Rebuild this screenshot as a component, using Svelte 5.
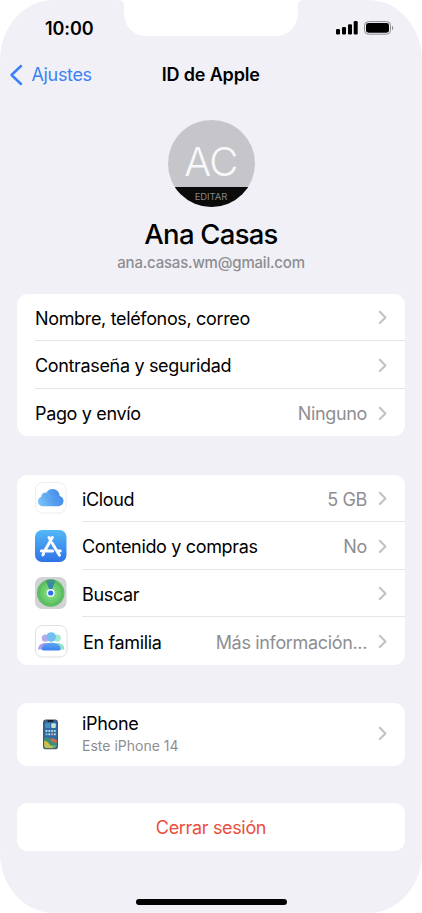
<script>
  const account = [
    { label: 'Nombre, teléfonos, correo', value: '' },
    { label: 'Contraseña y seguridad', value: '' },
    { label: 'Pago y envío', value: 'Ninguno' },
  ];
  const services = [
    { icon: 'cloud', label: 'iCloud', value: '5 GB' },
    { icon: 'store', label: 'Contenido y compras', value: 'No' },
    { icon: 'find', label: 'Buscar', value: '' },
    { icon: 'family', label: 'En familia', value: 'Más información...' },
  ];
</script>

{#snippet chevron()}
  <svg class="chevron" width="10" height="15" viewBox="0 0 10 15">
    <path d="M1.8 1.8 7.5 7.4 1.8 13" fill="none" stroke="#c3c3c6" stroke-width="2.1" stroke-linecap="round" stroke-linejoin="round" />
  </svg>
{/snippet}

{#snippet appIcon(name)}
  <svg class="icon" width="34" height="34" viewBox="0 0 34 34">
    {#if name === 'cloud'}
      <defs>
        <linearGradient id="cloud" x1="0" y1="0.7" x2="1" y2="0.4">
          <stop offset="0" stop-color="#78c4f8" /><stop offset="0.5" stop-color="#5aa0ee" /><stop offset="1" stop-color="#3f8bed" />
        </linearGradient>
      </defs>
      <rect x="1.5" y="1.5" width="30.5" height="30.5" rx="7" fill="#fff" stroke="#ededef" />
      <path d="M9.3 25.2C6.2 25.2 4 23.1 4 20.4c0-2.3 1.4-4 3.3-4.6-.1-2.8 2.5-4.8 5-3.9C13.5 9.6 15.8 8 18.5 8c4.1 0 7.1 3.1 7.2 7.1 2.3.6 3.8 2.5 3.8 4.9 0 3-2.3 5.2-5.2 5.2z" fill="url(#cloud)" />
      <path d="M7.3 15.8c-.1-2.8 2.5-4.8 5-3.9 2.4.8 3.8 2.8 4 5.2" fill="none" stroke="#91caf7" stroke-width=".6" opacity=".65" />
    {:else if name === 'store'}
      <defs>
        <linearGradient id="store" x1="0" y1="0" x2="0" y2="1">
          <stop offset="0" stop-color="#53b9f6" /><stop offset="1" stop-color="#2e72e8" />
        </linearGradient>
      </defs>
      <rect x="1" y="1" width="31.5" height="32" rx="7" fill="url(#store)" />
      <g stroke="#fff" stroke-width="2.9" stroke-linecap="round" fill="none">
        <path d="M18.4 8.4 10.9 21.5M15 8.4l1.7 2.9M18.1 14l7.4 12.3M7.4 22h11.2M24 22h2.3M9.6 24.8l-.8 1.3" />
      </g>
    {:else if name === 'find'}
      <defs>
        <linearGradient id="beam" x1="0" y1="0" x2="0" y2="1">
          <stop offset="0" stop-color="#3e987e" /><stop offset="1" stop-color="#3477d7" />
        </linearGradient>
      </defs>
      <rect x="1" y="1" width="31.5" height="32" rx="7" fill="#d2d3d4" />
      <circle cx="16.7" cy="17" r="13.8" fill="#5dbd62" />
      <circle cx="16.7" cy="17" r="10.3" fill="#6bcb6c" />
      <circle cx="16.7" cy="17" r="7" fill="#79d57a" />
      <path d="M16.7 17 11.9 4.6Q16.7 2.6 21.5 4.6z" fill="url(#beam)" />
      <circle cx="16.7" cy="17" r="4" fill="#fff" />
      <circle cx="16.7" cy="17" r="2.6" fill="#286fea" />
    {:else}
      <defs>
        <linearGradient id="body" x1="0" y1="0" x2="0" y2="1">
          <stop offset="0" stop-color="#5ea6f2" /><stop offset="1" stop-color="#3c83ed" />
        </linearGradient>
      </defs>
      <rect x="1.5" y="1.5" width="31.5" height="31.5" rx="7" fill="#fff" stroke="#dedfe2" />
      <circle cx="11.3" cy="14.1" r="3.6" fill="#b8a8ee" />
      <path d="M4.1 25.4c0-4 3-6.4 7.2-6.4 3 0 5 1.3 6 3.3l-4 3.1z" fill="#b29cec" />
      <circle cx="23.2" cy="14.1" r="3.6" fill="#9ee9d2" />
      <path d="M30.4 25.4c0-4-3-6.4-7.2-6.4-3 0-5 1.3-6 3.3l4 3.1z" fill="#8be2cf" />
      <circle cx="17.2" cy="13" r="4.8" fill="#74bff0" />
      <path d="M7.9 25c0-4.1 4-6.3 9.3-6.3s9.3 2.2 9.3 6.3c0 1-.5 1.4-1.5 1.4H9.4c-1 0-1.5-.4-1.5-1.4z" fill="url(#body)" />
    {/if}
  </svg>
{/snippet}

<main class="screen">
  <svg class="notch" width="186" height="38" viewBox="0 0 186 38" aria-hidden="true">
    <path d="M1 0Q6 .2 6 5v7C6 26 15 36 29 36h128c14 0 23-10 23-24V5q0-4.8 5-5z" fill="#fff" />
  </svg>

  <header class="status">
    <span class="time">10:00</span>
    <svg width="58" height="16" viewBox="0 0 58 16">
      <rect x="0" y="9" width="4" height="5.5" rx="1.2" />
      <rect x="6" y="7" width="4" height="7.5" rx="1.2" />
      <rect x="12" y="4.3" width="4" height="10.2" rx="1.2" />
      <rect x="17.7" y="1" width="4" height="13.5" rx="1.2" />
      <rect x="28.5" y="1.6" width="26" height="12.6" rx="3.8" fill="none" stroke="#8e8e91" />
      <rect x="30" y="3.1" width="23" height="9.6" rx="2.4" />
      <path d="M56 5.8c1.7.7 1.7 3.7 0 4.4z" fill="#8e8e91" />
    </svg>
  </header>

  <nav>
    <button class="back">
      <svg width="14" height="22" viewBox="0 0 14 22">
        <path d="M12 2 2.5 11 12 20" fill="none" stroke="#3b82f6" stroke-width="2.5" stroke-linecap="round" stroke-linejoin="round" />
      </svg>
      <span>Ajustes</span>
    </button>
    <h1>ID de Apple</h1>
    <span></span>
  </nav>

  <section class="profile">
    <div class="avatar">
      <span class="initials">AC</span>
      <span class="edit">EDITAR</span>
    </div>
    <h2>Ana Casas</h2>
    <p>ana.casas.wm@gmail.com</p>
  </section>

  <section class="card account">
    {#each account as item}
      <div class="row">
        <span class="label">{item.label}</span>
        <span class="value">{item.value}</span>
        {@render chevron()}
      </div>
    {/each}
  </section>

  <section class="card services">
    {#each services as item}
      <div class="service">
        {@render appIcon(item.icon)}
        <div class="row {item.icon}">
          <span class="label">{item.label}</span>
          <span class="value">{item.value}</span>
          {@render chevron()}
        </div>
      </div>
    {/each}
  </section>

  <section class="card device">
    <svg class="phone" width="16" height="31" viewBox="0 0 16 31">
      <rect x=".6" y="1" width="13.8" height="28.8" rx="2.4" fill="#2f6aa5" stroke="#4b4f54" stroke-width="1.1" />
      <path d="M1.2 19c4-2 6 1 12.6 5v3.3q0 1.9-2 1.9H3.2q-2 0-2-1.9z" fill="#3f8f78" />
      <path d="M1.2 22c4-1 5 5 10 7H3.2q-2 0-2-1.9z" fill="#dfbd3a" />
      <path d="M7 20c3-1 5 0 6.8 1v3c-3-1-5-1-6.8-4z" fill="#d86a4f" />
      <rect x="4.5" y="1.2" width="6" height="1.5" rx=".7" fill="#111" />
      <rect x="2.3" y="4.2" width="4.8" height="4.8" rx="1" fill="#4a91b8" />
      <rect x="8.2" y="4.2" width="4.6" height="4.8" rx="1" fill="#c6e2d6" />
      <g fill="#b9d3df">
        <rect x="2.5" y="11" width="2" height="2" rx=".4" />
        <rect x="5.3" y="11" width="2" height="2" rx=".4" />
        <rect x="8.1" y="11" width="2" height="2" rx=".4" />
        <rect x="10.8" y="11" width="2" height="2" rx=".4" />
        <rect x="2.5" y="14.3" width="2" height="2" rx=".4" fill="#87bdd6" />
        <rect x="5.3" y="14.3" width="2" height="2" rx=".4" />
        <rect x="8.1" y="14.3" width="2" height="2" rx=".4" fill="#e7a18b" />
        <rect x="10.8" y="14.3" width="2" height="2" rx=".4" />
      </g>
      <path d="M3 27.4h9.4" stroke="#8ccc9a" stroke-width="1.7" stroke-dasharray="1.7 .8" />
    </svg>
    <div class="device-text">
      <strong>iPhone</strong>
      <small>Este iPhone 14</small>
    </div>
    {@render chevron()}
  </section>

  <button class="card signout"><span>Cerrar sesión</span></button>
  <div class="home"></div>
</main>

<style>
  :global(body) { background: #fff; }
  * { box-sizing: border-box; }
  .screen {
    position: relative;
    width: 422px;
    height: 913px;
    display: flex;
    flex-direction: column;
    overflow: hidden;
    padding: 0 17px;
    background: #f1f0f6;
    border-radius: 54px / 60px;
    color: #000;
    font-family: Inter, 'Liberation Sans', sans-serif;
    font-size: 18px;
    letter-spacing: -0.34px;
  }
  .notch { position: absolute; left: 118px; top: 0; }
  svg { display: block; flex: none; }
  button { border: 0; padding: 0; background: none; font: inherit; letter-spacing: inherit; }
  h1, h2, p { margin: 0; }
  .status {
    display: flex;
    justify-content: space-between;
    align-items: center;
    height: 56px;
    padding: 0 11px 0 28px;
  }
  .time { font-size: 18px; font-weight: 600; letter-spacing: -0.1px; }
  nav {
    display: grid;
    grid-template-columns: 1fr auto 1fr;
    align-items: center;
    height: 37px;
    margin: 0 -8px 0 -8.5px;
  }
  .back { display: flex; align-items: center; gap: 9px; color: #3b82f6; }
  h1 { font-size: 18px; font-weight: 600; letter-spacing: -0.15px; }
  .profile { display: flex; flex-direction: column; align-items: center; height: 200.5px; padding-top: 27px; }
  .avatar {
    width: 87px;
    height: 87px;
    display: flex;
    flex: none;
    flex-direction: column;
    border-radius: 50%;
    overflow: hidden;
    background: #c6c5ca;
    text-align: center;
  }
  .initials { height: 67px; padding-top: 16px; line-height: 52px; font-size: 40px; font-weight: 300; letter-spacing: -0.6px; color: #f8f8fb; }
  .edit { height: 20px; background: #0b0b0b; color: #858585; font-size: 9.5px; line-height: 19px; letter-spacing: -0.1px; }
  h2 { margin-top: 10px; font-size: 27.5px; line-height: 34px; font-weight: 500; letter-spacing: -0.75px; }
  p { margin-top: 2px; font-size: 15px; line-height: 20px; font-weight: 500; color: #8d8d91; letter-spacing: -0.2px; }
  .card { flex: none; width: 388px; background: #fff; border-radius: 11px; }
  .row { flex: 1; display: flex; align-items: center; height: 47.5px; padding: 2.5px 17px 0 0; border-bottom: 0 solid #e5e5e7; }
  .account { height: 142.5px; padding-left: 18px; }
  .account .row:not(:last-child), .service:not(:last-child) .row { border-bottom-width: 1px; }
  .label { flex: 1; white-space: nowrap; }
  .value { color: #8e8e92; margin-right: 11px; white-space: nowrap; }
  .chevron { margin-bottom: 1px; }
  .services { margin-top: 38.5px; height: 190px; padding-left: 16.5px; }
  .service { display: flex; align-items: center; height: 47.5px; }
  .icon { margin-right: 14.5px; }
  .family .label { padding-left: 1px; }
  .device { display: flex; align-items: center; height: 63px; margin-top: 38px; padding: 0 17px 0 26px; }
  .device-text { flex: 1; display: flex; flex-direction: column; margin-left: 23px; padding-bottom: 1px; }
  strong { font-weight: 400; line-height: 23px; }
  small { font-size: 14px; line-height: 21px; color: #8e8e92; letter-spacing: 0.01px; }
  .signout { height: 47.5px; margin-top: 37.5px; padding-top: 1px; color: #eb4e3d; text-align: center; }
  .home { width: 151px; height: 6px; margin: 48px auto 0; border-radius: 3px; background: #000; }
</style>
